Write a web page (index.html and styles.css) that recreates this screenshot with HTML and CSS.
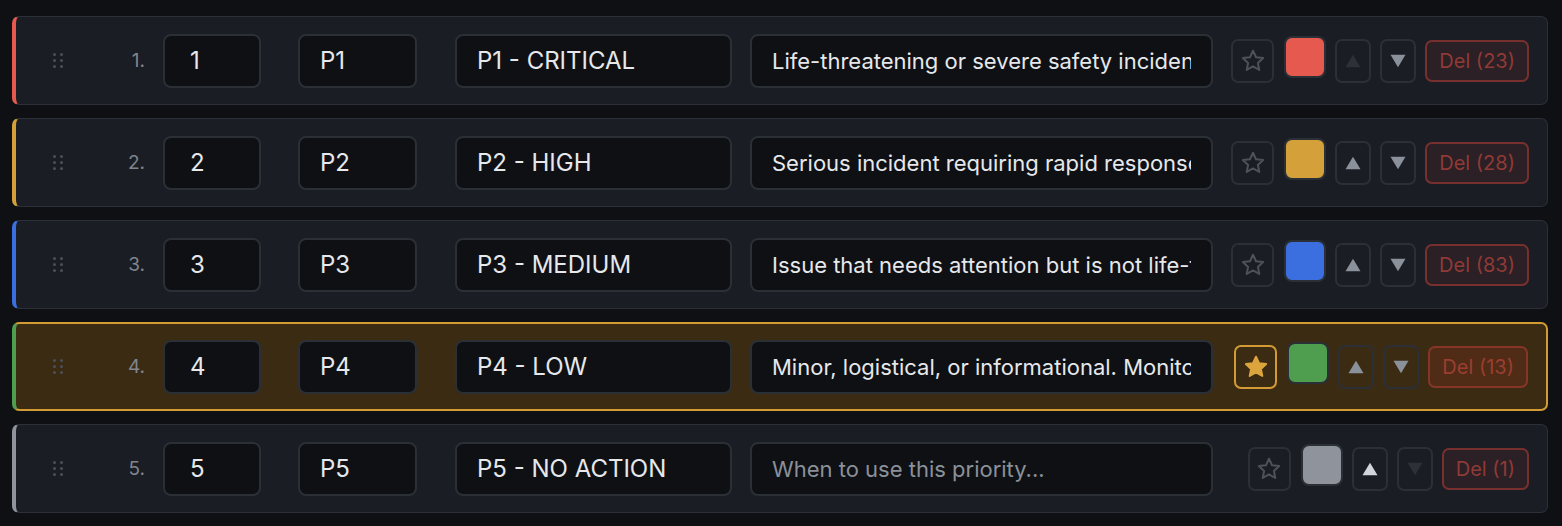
FILE: index.html
```html
<!DOCTYPE html>
<html lang="en">
<head>
    <meta charset="UTF-8">
    <title>Priorities</title>
    <link rel="stylesheet" href="styles.css">
</head>
<body>

<div class="priority-list">

    <!-- P1 -->
    <div class="row" style="--accent: #e5594f">
        <span class="handle"><i></i><i></i><i></i><i></i><i></i><i></i></span>
        <span class="num">1.</span>
        <input class="field f-id" type="text" value="1">
        <input class="field f-code" type="text" value="P1">
        <input class="field f-name" type="text" value="P1 - CRITICAL">
        <input class="field f-desc" type="text" value="Life-threatening or severe safety incident requiring immediate response">
        <div class="actions">
            <button class="btn star"><svg viewBox="0 0 24 24"><path d="M12 3.2l2.6 5.6 6.1.7-4.5 4.2 1.2 6-5.4-3-5.4 3 1.2-6-4.5-4.2 6.1-.7z"/></svg></button>
            <span class="swatch" style="background: #e5594f"></span>
            <button class="btn move off"><svg viewBox="0 0 16 16"><path d="M8 3l6 10H2z"/></svg></button>
            <button class="btn move"><svg viewBox="0 0 16 16"><path d="M8 13L2 3h12z"/></svg></button>
            <button class="del">Del (23)</button>
        </div>
    </div>

    <!-- P2 -->
    <div class="row" style="--accent: #d4a03a">
        <span class="handle"><i></i><i></i><i></i><i></i><i></i><i></i></span>
        <span class="num">2.</span>
        <input class="field f-id" type="text" value="2">
        <input class="field f-code" type="text" value="P2">
        <input class="field f-name" type="text" value="P2 - HIGH">
        <input class="field f-desc" type="text" value="Serious incident requiring rapid response">
        <div class="actions">
            <button class="btn star"><svg viewBox="0 0 24 24"><path d="M12 3.2l2.6 5.6 6.1.7-4.5 4.2 1.2 6-5.4-3-5.4 3 1.2-6-4.5-4.2 6.1-.7z"/></svg></button>
            <span class="swatch" style="background: #d4a03a"></span>
            <button class="btn move"><svg viewBox="0 0 16 16"><path d="M8 3l6 10H2z"/></svg></button>
            <button class="btn move"><svg viewBox="0 0 16 16"><path d="M8 13L2 3h12z"/></svg></button>
            <button class="del">Del (28)</button>
        </div>
    </div>

    <!-- P3 -->
    <div class="row" style="--accent: #3b6fe0">
        <span class="handle"><i></i><i></i><i></i><i></i><i></i><i></i></span>
        <span class="num">3.</span>
        <input class="field f-id" type="text" value="3">
        <input class="field f-code" type="text" value="P3">
        <input class="field f-name" type="text" value="P3 - MEDIUM">
        <input class="field f-desc" type="text" value="Issue that needs attention but is not life-threatening">
        <div class="actions">
            <button class="btn star"><svg viewBox="0 0 24 24"><path d="M12 3.2l2.6 5.6 6.1.7-4.5 4.2 1.2 6-5.4-3-5.4 3 1.2-6-4.5-4.2 6.1-.7z"/></svg></button>
            <span class="swatch" style="background: #3b6fe0"></span>
            <button class="btn move"><svg viewBox="0 0 16 16"><path d="M8 3l6 10H2z"/></svg></button>
            <button class="btn move"><svg viewBox="0 0 16 16"><path d="M8 13L2 3h12z"/></svg></button>
            <button class="del">Del (83)</button>
        </div>
    </div>

    <!-- P4 (default) -->
    <div class="row is-default" style="--accent: #4f9e4f">
        <span class="handle"><i></i><i></i><i></i><i></i><i></i><i></i></span>
        <span class="num">4.</span>
        <input class="field f-id" type="text" value="4">
        <input class="field f-code" type="text" value="P4">
        <input class="field f-name" type="text" value="P4 - LOW">
        <input class="field f-desc" type="text" value="Minor, logistical, or informational. Monitor as needed">
        <div class="actions">
            <button class="btn star on"><svg viewBox="0 0 24 24"><path d="M12 3.2l2.6 5.6 6.1.7-4.5 4.2 1.2 6-5.4-3-5.4 3 1.2-6-4.5-4.2 6.1-.7z"/></svg></button>
            <span class="swatch" style="background: #4f9e4f"></span>
            <button class="btn move"><svg viewBox="0 0 16 16"><path d="M8 3l6 10H2z"/></svg></button>
            <button class="btn move"><svg viewBox="0 0 16 16"><path d="M8 13L2 3h12z"/></svg></button>
            <button class="del">Del (13)</button>
        </div>
    </div>

    <!-- P5 -->
    <div class="row" style="--accent: #8e939c">
        <span class="handle"><i></i><i></i><i></i><i></i><i></i><i></i></span>
        <span class="num">5.</span>
        <input class="field f-id" type="text" value="5">
        <input class="field f-code" type="text" value="P5">
        <input class="field f-name" type="text" value="P5 - NO ACTION">
        <input class="field f-desc" type="text" value="" placeholder="When to use this priority...">
        <div class="actions">
            <button class="btn star"><svg viewBox="0 0 24 24"><path d="M12 3.2l2.6 5.6 6.1.7-4.5 4.2 1.2 6-5.4-3-5.4 3 1.2-6-4.5-4.2 6.1-.7z"/></svg></button>
            <span class="swatch" style="background: #8e939c"></span>
            <button class="btn move bright"><svg viewBox="0 0 16 16"><path d="M8 3l6 10H2z"/></svg></button>
            <button class="btn move off"><svg viewBox="0 0 16 16"><path d="M8 13L2 3h12z"/></svg></button>
            <button class="del">Del (1)</button>
        </div>
    </div>

</div>

</body>
</html>
```

FILE: styles.css
```css
body {
    margin: 0;
    background: #0e1014;
    font-family: 'Inter', 'Noto Sans', sans-serif;
    color: #e6e8eb;
}

.priority-list {
    display: flex;
    flex-direction: column;
    gap: 13px;
    padding: 16px 14px 0 12px;
}

.row {
    display: flex;
    align-items: center;
    height: 89px;
    box-sizing: border-box;
    padding: 0 18px 0 37px;
    background: #1a1d24;
    border: 1px solid #2c3038;
    border-left: 4px solid var(--accent);
    border-radius: 7px;
}
.row.is-default {
    background: #3b2b13;
    border-color: #d29b34;
    border-left-color: var(--accent);
    border-width: 2px 2px 2px 4px;
}

/* drag handle */
.handle {
    display: grid;
    grid-template-columns: 3px 3px;
    gap: 3px 4px;
    width: 10px;
}
.handle i {
    width: 3px;
    height: 3px;
    border-radius: 50%;
    background: #4b5058;
}

.num {
    width: 82px;
    text-align: right;
    font-size: 19px;
    color: #80858e;
    margin-right: 18px;
}

.field {
    height: 54px;
    box-sizing: border-box;
    padding: 0 20px;
    background: #0e1014;
    border: 2px solid #2b2f36;
    border-radius: 8px;
    font-family: inherit;
    font-size: 22px;
    color: #e6e8eb;
    outline: none;
}
.field::placeholder {
    color: #8b9099;
}
.f-id { width: 98px; margin-right: 37px; padding-left: 25px; font-size: 24px; }
.f-code { width: 119px; margin-right: 38px; font-size: 24px; }
.f-name { width: 277px; margin-right: 18px; font-size: 24px; }
.f-desc { width: 463px; }

.actions {
    margin-left: auto;
    display: flex;
    align-items: center;
    gap: 9px;
}

.btn {
    display: flex;
    align-items: center;
    justify-content: center;
    height: 44px;
    width: 36px;
    padding: 0;
    box-sizing: border-box;
    background: transparent;
    border: 2px solid #2b2f36;
    border-radius: 7px;
}
.btn svg {
    width: 20px;
    height: 20px;
    fill: #8b919b;
}
.btn.off svg { fill: #2c3038; }
.btn.bright svg { fill: #d2d5da; }

.star {
    width: 43px;
    margin-right: 1px;
}
.star svg {
    width: 28px;
    height: 28px;
    fill: none;
    stroke: #4d525a;
    stroke-width: 1.7;
    stroke-linejoin: round;
}
.star.on {
    border-color: #d29b34;
}
.star.on svg {
    fill: #dba43c;
    stroke: #dba43c;
}

.swatch {
    width: 42px;
    height: 42px;
    flex-shrink: 0;
    box-sizing: border-box;
    border: 2px solid #2b2f36;
    border-radius: 8px;
    margin-bottom: 8px;
}

.del {
    height: 42px;
    padding: 0 12px;
    background: rgba(200, 55, 45, 0.1);
    border: 2px solid rgba(170, 60, 52, 0.6);
    border-radius: 7px;
    font-family: inherit;
    font-size: 20px;
    color: rgba(190, 70, 62, 0.7);
}
.is-default .del {
    background: rgba(200, 55, 45, 0.15);
}
```
